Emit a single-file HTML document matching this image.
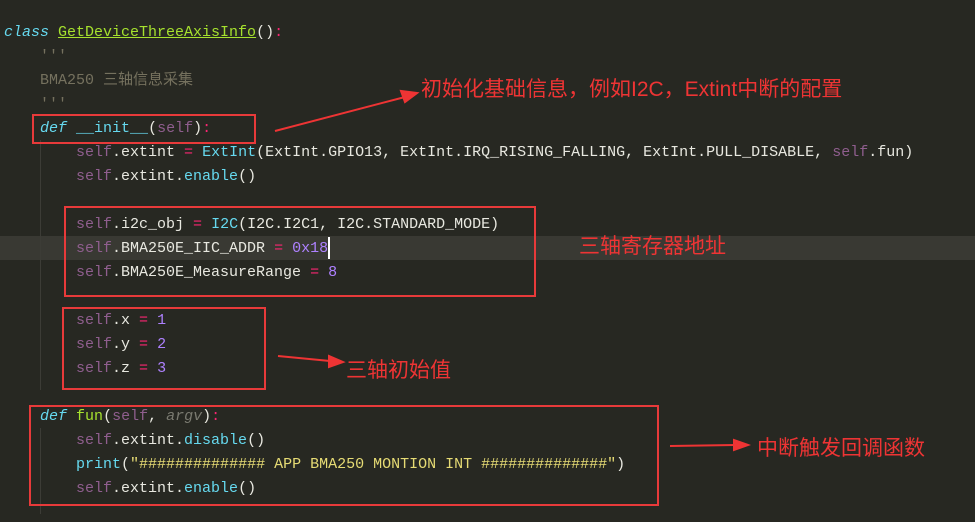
<!DOCTYPE html>
<html><head><meta charset="utf-8"><style>
body{margin:0;width:975px;height:522px;background:#272822;overflow:hidden;position:relative;font-family:"Liberation Mono","Noto Sans CJK SC",monospace;font-size:15px;color:#e8e8e0}
.l{position:absolute;left:4px;height:24px;line-height:24px;white-space:pre;top:1px}
.hl{position:absolute;left:0;top:236px;width:975px;height:24px;background:#393933}
.k{color:#66d9ef;font-style:italic}
.s{color:#8f5e8e}
.f{color:#a6e22e}
.b{color:#66d9ef}
.o{color:#f92672}
.n{color:#ae81ff}
.c{color:#75715e}
.y{color:#e6db74}
.p{color:#7a7a70;font-style:italic}
.box{position:absolute;border:2px solid #e83a3a}
.a{position:absolute;color:#ee3434;font-family:"Liberation Sans","Noto Sans CJK SC",sans-serif;font-size:21px;white-space:nowrap}
.guide{position:absolute;width:1px;background:#3c3c36}
</style></head><body>
<div class="hl"></div>
<div class="guide" style="left:40px;top:140px;height:250px"></div>
<div class="guide" style="left:40px;top:428px;height:86px"></div>
<div class="l" style="top:21px"><span class="k">class</span> <span class="f" style="text-decoration:underline">GetDeviceThreeAxisInfo</span>()<span class="o">:</span></div>
<div class="l c" style="top:45px">    '''</div>
<div class="l c" style="top:69px">    BMA250 三轴信息采集</div>
<div class="l c" style="top:93px">    '''</div>
<div class="l" style="top:117px">    <span class="k">def</span> <span class="b">__init__</span>(<span class="s">self</span>)<span class="o">:</span></div>
<div class="l" style="top:141px">        <span class="s">self</span>.extint <span class="o">=</span> <span class="b">ExtInt</span>(ExtInt.GPIO13, ExtInt.IRQ_RISING_FALLING, ExtInt.PULL_DISABLE, <span class="s">self</span>.fun)</div>
<div class="l" style="top:165px">        <span class="s">self</span>.extint.<span class="b">enable</span>()</div>
<div class="l" style="top:213px">        <span class="s">self</span>.i2c_obj <span class="o">=</span> <span class="b">I2C</span>(I2C.I2C1, I2C.STANDARD_MODE)</div>
<div class="l" style="top:237px">        <span class="s">self</span>.BMA250E_IIC_ADDR <span class="o">=</span> <span class="n">0x18</span></div>
<div class="l" style="top:261px">        <span class="s">self</span>.BMA250E_MeasureRange <span class="o">=</span> <span class="n">8</span></div>
<div class="l" style="top:309px">        <span class="s">self</span>.x <span class="o">=</span> <span class="n">1</span></div>
<div class="l" style="top:333px">        <span class="s">self</span>.y <span class="o">=</span> <span class="n">2</span></div>
<div class="l" style="top:357px">        <span class="s">self</span>.z <span class="o">=</span> <span class="n">3</span></div>
<div class="l" style="top:405px">    <span class="k">def</span> <span class="f">fun</span>(<span class="s">self</span>, <span class="p">argv</span>)<span class="o">:</span></div>
<div class="l" style="top:429px">        <span class="s">self</span>.extint.<span class="b">disable</span>()</div>
<div class="l" style="top:453px">        <span class="b">print</span>(<span class="y">"############## APP BMA250 MONTION INT ##############"</span>)</div>
<div class="l" style="top:477px">        <span class="s">self</span>.extint.<span class="b">enable</span>()</div>
<div style="position:absolute;left:328px;top:237px;width:2px;height:22px;background:#fff"></div>

<div class="box" style="left:32px;top:114px;width:220px;height:26px"></div>
<div class="box" style="left:64px;top:206px;width:468px;height:87px"></div>
<div class="box" style="left:62px;top:307px;width:200px;height:79px"></div>
<div class="box" style="left:29px;top:405px;width:626px;height:97px"></div>

<svg style="position:absolute;left:0;top:0" width="975" height="522">
<g stroke="#ee3434" stroke-width="2" fill="#ee3434">
<line x1="275" y1="131" x2="405" y2="97"/><polygon points="417,93 401,91 405,102"/>
<line x1="278" y1="356" x2="330" y2="361"/><polygon points="343,362 329,356 329,367"/>
<line x1="670" y1="446" x2="735" y2="445"/><polygon points="748,445 734,440 734,450"/>
</g></svg>
<div class="a" style="left:421px;top:73px">初始化基础信息，例如I2C，Extint中断的配置</div>
<div class="a" style="left:579px;top:230px">三轴寄存器地址</div>
<div class="a" style="left:346px;top:354px">三轴初始值</div>
<div class="a" style="left:757px;top:432px">中断触发回调函数</div>
</body></html>
